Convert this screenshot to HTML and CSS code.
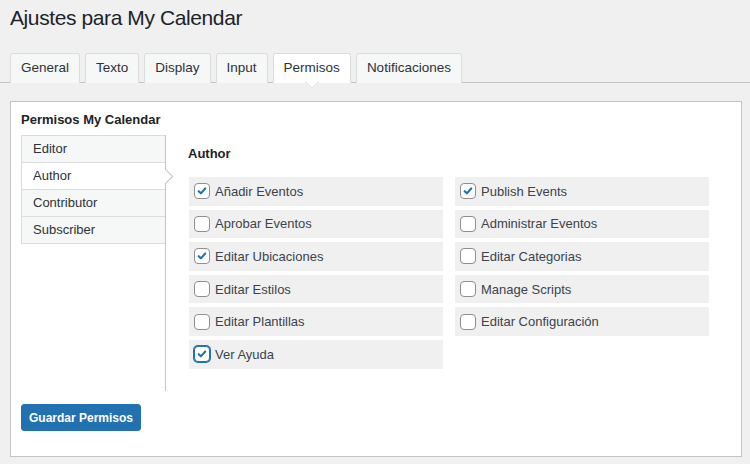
FILE: index.html
```html
<!DOCTYPE html>
<html lang="es">
<head>
    <meta charset="UTF-8">
    <title>Ajustes para My Calendar</title>
    <link rel="stylesheet" href="styles.css">
</head>
<body>
    <div class="wrap">
        <h1>Ajustes para My Calendar</h1>

        <nav class="nav-tabs">
            <a href="#" class="nav-tab">General</a>
            <a href="#" class="nav-tab">Texto</a>
            <a href="#" class="nav-tab">Display</a>
            <a href="#" class="nav-tab">Input</a>
            <a href="#" class="nav-tab active">Permisos</a>
            <a href="#" class="nav-tab">Notificaciones</a>
        </nav>

        <div class="postbox">
            <h2>Permisos My Calendar</h2>

            <div class="roles">
                <ul class="role-tabs">
                    <li><a href="#">Editor</a></li>
                    <li class="active"><a href="#">Author</a></li>
                    <li><a href="#">Contributor</a></li>
                    <li><a href="#">Subscriber</a></li>
                </ul>

                <div class="role-panel">
                    <h3>Author</h3>
                    <div class="caps">
                        <label class="cap"><span class="cb checked"><svg viewBox="0 0 16 16"><path d="M4.2 8.2l2.5 2.5 5-5.6"/></svg></span>Añadir Eventos</label>
                        <label class="cap"><span class="cb checked"><svg viewBox="0 0 16 16"><path d="M4.2 8.2l2.5 2.5 5-5.6"/></svg></span>Publish Events</label>
                        <label class="cap"><span class="cb"></span>Aprobar Eventos</label>
                        <label class="cap"><span class="cb"></span>Administrar Eventos</label>
                        <label class="cap"><span class="cb checked"><svg viewBox="0 0 16 16"><path d="M4.2 8.2l2.5 2.5 5-5.6"/></svg></span>Editar Ubicaciones</label>
                        <label class="cap"><span class="cb"></span>Editar Categorias</label>
                        <label class="cap"><span class="cb"></span>Editar Estilos</label>
                        <label class="cap"><span class="cb"></span>Manage Scripts</label>
                        <label class="cap"><span class="cb"></span>Editar Plantillas</label>
                        <label class="cap"><span class="cb"></span>Editar Configuración</label>
                        <label class="cap"><span class="cb checked focus"><svg viewBox="0 0 16 16"><path d="M4.2 8.2l2.5 2.5 5-5.6"/></svg></span>Ver Ayuda</label>
                    </div>
                </div>
            </div>

            <button class="button-primary">Guardar Permisos</button>
        </div>
    </div>
</body>
</html>
```

FILE: styles.css
```css
* {
    margin: 0;
    padding: 0;
    box-sizing: border-box;
}

body {
    font-family: "Liberation Sans", Arial, sans-serif;
    font-size: 13px;
    background-color: #f0f0f1;
    color: #3c434a;
}

.wrap {
    padding: 0 8px 0 10px;
}

h1 {
    font-size: 21px;
    font-weight: 400;
    letter-spacing: -0.4px;
    line-height: 29px;
    color: #1d2327;
    padding-top: 3px;
}

/* top tabs */
.nav-tabs {
    display: flex;
    gap: 5px;
    margin-top: 21px;
    margin-left: -10px;
    margin-right: -8px;
    padding-left: 10px;
    border-bottom: 1px solid #c3c4c7;
}

.nav-tab {
    position: relative;
    display: block;
    padding: 5px 10px 6px;
    font-size: 13.5px;
    line-height: 18px;
    color: #2c3338;
    text-decoration: none;
    background-color: #f6f7f7;
    border: 1px solid #dcdcde;
    border-bottom: none;
    border-radius: 3px 3px 0 0;
    margin-bottom: -1px;
}

.nav-tab.active {
    background-color: #ffffff;
    border-bottom: 1px solid #ffffff;
    padding-bottom: 5px;
}

.nav-tab.active::after {
    content: "";
    position: absolute;
    left: 50%;
    bottom: -5px;
    width: 9px;
    height: 9px;
    margin-left: -5px;
    background: #ffffff;
    border-right: 1px solid #e2e3e5;
    border-bottom: 1px solid #e2e3e5;
    transform: rotate(45deg);
}

/* panel */
.postbox {
    margin-top: 18px;
    background-color: #ffffff;
    border: 1px solid #c3c4c7;
    box-shadow: 0 1px 1px rgba(0, 0, 0, .04);
    padding: 9px 10px 24px;
    height: 356px;
}

.postbox h2 {
    font-size: 13px;
    font-weight: 700;
    line-height: 18px;
    color: #1d2327;
    margin-bottom: 6px;
}

.roles {
    display: flex;
}

.role-tabs {
    list-style: none;
    width: 145px;
    flex-shrink: 0;
    height: 256px;
    border-right: 1px solid #c3c4c7;
}

.role-tabs li {
    position: relative;
    background-color: #f6f7f7;
    border: 1px solid #dcdcde;
    border-right: none;
    margin-top: -1px;
}

.role-tabs li:first-child {
    margin-top: 0;
}

.role-tabs a {
    display: block;
    padding: 4px 11px 4px;
    line-height: 18px;
    font-size: 13px;
    color: #2c3338;
    text-decoration: none;
}

.role-tabs li.active {
    background-color: #ffffff;
}

.role-tabs li.active::after {
    content: "";
    position: absolute;
    top: 50%;
    right: -6px;
    width: 10px;
    height: 10px;
    margin-top: -5px;
    background: #ffffff;
    border-top: 1px solid #c3c4c7;
    border-right: 1px solid #c3c4c7;
    transform: rotate(45deg);
}

.role-panel {
    padding: 10px 0 0 22px;
}

.role-panel h3 {
    font-size: 13px;
    font-weight: 700;
    line-height: 18px;
    color: #1d2327;
    margin-bottom: 14px;
}

.caps {
    display: grid;
    grid-template-columns: 254px 254px;
    column-gap: 12px;
    row-gap: 4px;
    margin-left: 1px;
}

.cap {
    display: flex;
    align-items: center;
    gap: 5px;
    height: 28.6px;
    padding-left: 5px;
    background-color: #f0f0f1;
    font-size: 13px;
    color: #3c434a;
}

.cb {
    display: flex;
    align-items: center;
    justify-content: center;
    width: 16px;
    height: 16px;
    background: #ffffff;
    border: 1px solid #8c8f94;
    border-radius: 4px;
}

.cb svg {
    width: 14px;
    height: 14px;
    fill: none;
    stroke: #2271b1;
    stroke-width: 2.4;
    stroke-linecap: round;
    stroke-linejoin: round;
}

.cb.focus {
    border-color: #2271b1;
    box-shadow: 0 0 0 1px #2271b1;
}

.button-primary {
    display: block;
    margin-top: 13px;
    width: 120px;
    height: 27px;
    background-color: #2271b1;
    border: 1px solid #2271b1;
    border-radius: 3px;
    color: #ffffff;
    font-family: "Liberation Sans", Arial, sans-serif;
    font-size: 12px;
    font-weight: 700;
    cursor: pointer;
}
```
